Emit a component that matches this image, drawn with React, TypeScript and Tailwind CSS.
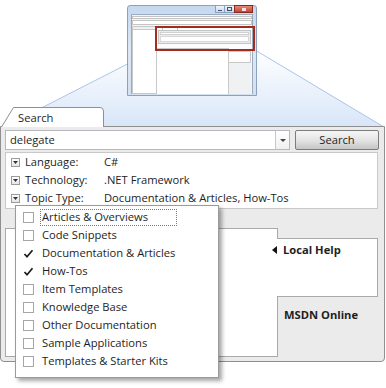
import React from "react";

function MiniWindow() {
  return (
    <div className="absolute left-[127px] top-[5px] w-[130px] h-[91px] rounded-t-[3px] border border-[#8aa2bf] bg-gradient-to-b from-[#c4d8ef] via-[#dde8f5] to-[#d3e0ef]">
      <div className="absolute left-[87px] top-[-1px] w-[10px] h-[8px] border border-[#8aa2bf] bg-gradient-to-b from-[#eef4fb] to-[#c9d9ec] flex items-end justify-center pb-[1px]">
        <div className="w-[4px] h-[1px] bg-[#40536d]" />
      </div>
      <div className="absolute left-[96px] top-[-1px] w-[11px] h-[8px] border border-[#8aa2bf] bg-gradient-to-b from-[#eef4fb] to-[#c9d9ec] flex items-center justify-center">
        <div className="w-[5px] h-[4px] border border-[#40536d]" />
      </div>
      <div className="absolute left-[106px] top-[-1px] w-[19px] h-[8px] border border-[#8a2a1c] bg-gradient-to-b from-[#e48a7c] to-[#c2402e] flex items-center justify-center">
        <div className="w-[4px] h-[3px] bg-white/80" />
      </div>
      <div className="absolute left-[3px] top-[8px] w-[122px] h-[80px] border border-[#9aabc0] bg-[#f3f5f8]" />
      <div className="absolute left-[4px] top-[10px] w-[120px] h-[3px] border border-[#c4c4c4] bg-white" />
      <div className="absolute left-[4px] top-[14px] w-[120px] h-[5px] border border-[#c4c4c4] bg-white" />
      <div className="absolute left-[4px] top-[20px] w-[25px] h-[68px] border border-[#c8c8c8] bg-white">
        <div className="h-[3px] border-b border-[#c8c8c8] bg-[#f0f0f0]" />
      </div>
      <div className="absolute left-[28px] top-[20px] w-[96px] h-[68px] bg-gradient-to-b from-[#ffffff] to-[#f1f5fb]" />
      <div className="absolute left-[34px] top-[21px] w-[16px] h-[4px] border border-[#c4c4c4] bg-white" />
      <div className="absolute left-[30px] top-[24px] w-[93px] h-[14px] border border-[#c4c4c4] bg-[#ececec]">
        <div className="mx-[1px] mt-[1px] h-[3px] bg-white border border-[#d0d0d0]" />
        <div className="mx-[1px] mt-[1px] h-[6px] bg-white border border-[#d8d8d8]" />
      </div>
      <div className="absolute left-[28px] top-[42px] w-[73px] h-[46px] border-l border-t border-[#c8c8c8] bg-white" />
      <div className="absolute left-[100px] top-[45px] w-[23px] h-[12px] border border-[#c8c8c8] bg-white" />
      <div className="absolute left-[100px] top-[57px] w-[23px] h-[31px] border-l border-[#c8c8c8] bg-[#f0f1f3]" />
      <div className="absolute left-[27px] top-[20px] w-[100px] h-[25px] border-2 border-[#a32c1c]" />
    </div>
  );
}

function Check() {
  return (
    <svg width="11" height="11" viewBox="0 0 11 11" className="block">
      <path d="M1.5 6 L4 8.8 L9.5 2.2" fill="none" stroke="#1a1a1a" strokeWidth="1.7" />
    </svg>
  );
}

function Toggle() {
  return (
    <div className="w-[9px] h-[9px] border border-[#9c9c9c] bg-gradient-to-b from-white to-[#e6e6e6] flex items-center justify-center">
      <svg width="5" height="3" viewBox="0 0 5 3">
        <path d="M0 0 H5 L2.5 3 Z" fill="#333" />
      </svg>
    </div>
  );
}

const items: { label: string; checked: boolean }[] = [
  { label: "Articles & Overviews", checked: false },
  { label: "Code Snippets", checked: false },
  { label: "Documentation & Articles", checked: true },
  { label: "How-Tos", checked: true },
  { label: "Item Templates", checked: false },
  { label: "Knowledge Base", checked: false },
  { label: "Other Documentation", checked: false },
  { label: "Sample Applications", checked: false },
  { label: "Templates & Starter Kits", checked: false },
];

const filters = [
  { label: "Language:", value: "C#" },
  { label: "Technology:", value: ".NET Framework" },
  { label: "Topic Type:", value: "Documentation & Articles, How-Tos" },
];

export default function App() {
  return (
    <div className="relative w-[386px] h-[388px] overflow-hidden bg-white font-['Open_Sans',sans-serif] text-[11.2px] leading-none text-[#1e1e1e]">
      <svg className="absolute left-0 top-0" width="386" height="130">
        <defs>
          <linearGradient id="pg" x1="0" y1="0" x2="0" y2="1">
            <stop offset="0" stopColor="#ffffff" />
            <stop offset="1" stopColor="#d7e5f8" />
          </linearGradient>
        </defs>
        <polygon points="155,50 255,50 384,127 0,129" fill="url(#pg)" />
        <line x1="155" y1="50" x2="0" y2="129" stroke="#aac4ec" />
        <line x1="255" y1="50" x2="384" y2="127" stroke="#aac4ec" />
      </svg>

      <MiniWindow />

      <div className="relative pt-[107px]">
        <div className="relative w-[104px] h-[20px] mb-[-1px] z-10">
          <svg className="absolute inset-0" width="104" height="20">
            <path d="M1.5 20 L13.5 0.5 H100 Q103.5 0.5 103.5 4 V20" fill="white" stroke="#8f8f8f" />
          </svg>
          <div className="relative pl-[18px] pt-[4px] leading-[14px]">Search</div>
        </div>
        <div className="w-[385px] h-[236px] border border-[#8f8f8f] rounded-b-[4px] bg-[#ebebeb] pl-[4px] pt-[3px]">
          <div className="flex gap-[5px] h-[20px]">
            <div className="w-[285px] flex border border-[#b5b8bf] bg-white">
              <div className="flex-1 pl-[4px] flex items-center">delegate</div>
              <div className="w-[14px] border-l border-[#c8c8c8] bg-gradient-to-b from-white to-[#f0f0f0] flex items-center justify-center">
                <svg width="6" height="3" viewBox="0 0 6 3">
                  <path d="M0 0 H6 L3 3 Z" fill="#444" />
                </svg>
              </div>
            </div>
            <div className="w-[84px] h-[20px] rounded-[2px] border border-[#7c7c7c] bg-gradient-to-b from-[#f6f6f6] via-[#e4e4e4] to-[#c6c6c6] flex items-center justify-center">
              Search
            </div>
          </div>
          <div className="mt-[2px] w-[373px] h-[57px] border border-[#c9c9c9] bg-white pl-[5px]">
            {filters.map((f) => (
              <div key={f.label} className="h-[18px] flex items-center">
                <Toggle />
                <div className="w-[79px] ml-[5px]">{f.label}</div>
                <div>{f.value}</div>
              </div>
            ))}
          </div>
          <div className="mt-[19px] flex h-[129px]">
            <div className="w-[272px] border-l border-t border-b border-[#a9a9a9] bg-white" />
            <div className="w-[101px] flex flex-col">
              <div className="h-[10px] border-l border-[#a9a9a9]" />
              <div className="h-[59px] border-t border-r border-b border-[#a9a9a9] bg-white pt-[3px]">
                <div className="flex items-center h-[16px] ml-[-5px] font-bold">
                  <svg width="5" height="8" viewBox="0 0 5 8" className="mr-[6px]">
                    <path d="M5 0 V8 L0 4 Z" fill="#111" />
                  </svg>
                  Local Help
                </div>
              </div>
              <div className="flex-1 border-l border-[#a9a9a9] pl-[6px] pt-[12px] font-bold">MSDN Online</div>
            </div>
          </div>
        </div>
      </div>

      <div className="absolute left-[15px] top-[205px] w-[204px] h-[173px] border border-[#9a9a9a] bg-white shadow-[3px_3px_4px_rgba(0,0,0,0.35)] pt-[2px] pl-[7px]">
        {items.map((it, i) => (
          <div key={it.label} className="h-[18px] flex items-center">
            {it.checked ? (
              <div className="w-[11px] h-[11px]">
                <Check />
              </div>
            ) : (
              <div className="w-[11px] h-[11px] border border-[#a6a6a6] bg-white" />
            )}
            {i === 0 ? (
              <div className="ml-[6px] w-[137px] h-[17px] border border-dotted border-[#7a7a7a] pl-[1px] flex items-center">
                {it.label}
              </div>
            ) : (
              <div className="ml-[8px]">{it.label}</div>
            )}
          </div>
        ))}
      </div>
    </div>
  );
}
